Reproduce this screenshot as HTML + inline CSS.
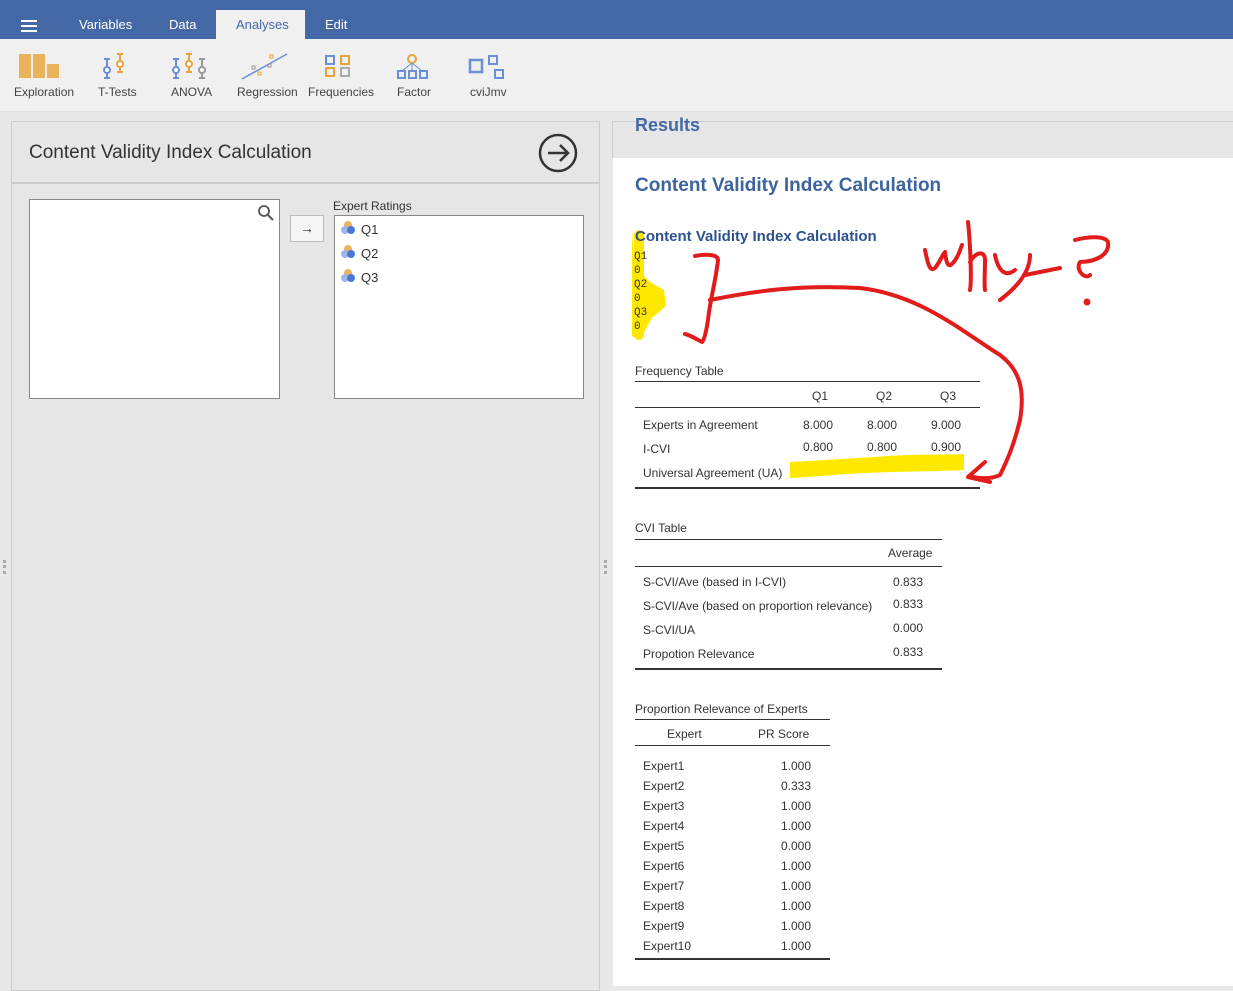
<!DOCTYPE html>
<html><head><meta charset="utf-8"><style>
*{margin:0;padding:0;box-sizing:border-box}
body{width:1233px;height:986px;overflow:hidden;background:#e8e8e8;font-family:"Liberation Sans",sans-serif;position:relative;color:#333}
.a{position:absolute;white-space:nowrap}
.t{font-size:12px;color:#333}
.hl{position:absolute;background:#333;height:1px}
</style></head><body>
<div class="a" style="left:0;top:0;width:1233px;height:39px;background:#4468a6"></div>
<div class="a" style="left:21px;top:25px;width:16px;height:2px;background:#fff;box-shadow:0 -5px 0 #fff,0 5px 0 #fff"></div>
<div class="a" style="left:79px;top:17px;color:#fff;font-size:13px">Variables</div>
<div class="a" style="left:169px;top:17px;color:#fff;font-size:13px">Data</div>
<div class="a" style="left:216px;top:10px;width:89px;height:29px;background:#f0f0f0"></div>
<div class="a" style="left:236px;top:17px;color:#4468a6;font-size:13px">Analyses</div>
<div class="a" style="left:325px;top:17px;color:#fff;font-size:13px">Edit</div>
<div class="a" style="left:0;top:39px;width:1233px;height:73px;background:#f0f0f0;border-bottom:1px solid #ddd"></div>
<svg class="a" style="left:0;top:39px" width="520" height="45">
<g fill="#e8b35a"><rect x="19" y="15" width="12" height="24"/><rect x="33" y="15" width="12" height="24"/><rect x="47" y="25" width="12" height="14"/></g>
<g fill="none" stroke-width="2"><path d="M107 20v19M104 20h6M104 39h6" stroke="#6b8fd6"/><circle cx="107" cy="31" r="3" stroke="#6b8fd6" fill="#fff"/><path d="M120 15v18M117 15h6M117 33h6" stroke="#e8a43a"/><circle cx="120" cy="25" r="3" stroke="#e8a43a" fill="#fff"/>
<path d="M176 20v19M173 20h6M173 39h6" stroke="#6b8fd6"/><circle cx="176" cy="31" r="3" stroke="#6b8fd6" fill="#fff"/><path d="M189 15v18M186 15h6M186 33h6" stroke="#e8a43a"/><circle cx="189" cy="25" r="3" stroke="#e8a43a" fill="#fff"/><path d="M202 20v19M199 20h6M199 39h6" stroke="#999"/><circle cx="202" cy="31" r="3" stroke="#999" fill="#fff"/>
<path d="M242 40L287 15" stroke="#6b8fd6" stroke-width="1.5"/><g stroke-width="1"><rect x="252" y="27" width="3" height="3" stroke="#999"/><rect x="258" y="33" width="3" height="3" stroke="#e8a43a"/><rect x="268" y="25" width="3" height="3" stroke="#999"/><rect x="270" y="16" width="3" height="3" stroke="#e8a43a"/></g>
<rect x="326" y="17" width="8" height="8" stroke="#6b8fd6"/><rect x="341" y="17" width="8" height="8" stroke="#e8a43a"/><rect x="326" y="29" width="8" height="8" stroke="#e8a43a"/><rect x="341" y="29" width="8" height="8" stroke="#aaa"/>
<circle cx="412" cy="20" r="4" stroke="#e8a43a"/><path d="M412 24L402 32M412 24v8M412 24l10 8" stroke="#6b8fd6" stroke-width="1"/><rect x="398" y="32" width="7" height="7" stroke="#6b8fd6"/><rect x="409" y="32" width="7" height="7" stroke="#6b8fd6"/><rect x="420" y="32" width="7" height="7" stroke="#6b8fd6"/>
<rect x="470" y="21" width="12" height="12" stroke="#6b8fd6" stroke-width="2.5"/><rect x="489" y="17" width="8" height="8" stroke="#6b8fd6"/><rect x="495" y="31" width="8" height="8" stroke="#6b8fd6"/></g>
</svg>
<div class="a" style="top:85px;left:14px;font-size:12px;color:#444">Exploration</div>
<div class="a" style="top:85px;left:98px;font-size:12px;color:#444">T-Tests</div>
<div class="a" style="top:85px;left:171px;font-size:12px;color:#444">ANOVA</div>
<div class="a" style="top:85px;left:237px;font-size:12px;color:#444">Regression</div>
<div class="a" style="top:85px;left:308px;font-size:12px;color:#444">Frequencies</div>
<div class="a" style="top:85px;left:397px;font-size:12px;color:#444">Factor</div>
<div class="a" style="top:85px;left:470px;font-size:12px;color:#444">cviJmv</div>

<div class="a" style="left:11px;top:121px;width:589px;height:870px;background:#e6e6e6;border:1px solid #ccc"></div>
<div class="a" style="left:29px;top:142px;font-size:19px;color:#333">Content Validity Index Calculation</div>
<div class="a" style="left:12px;top:182px;width:587px;height:2px;background:#ccc"></div>
<svg class="a" style="left:536px;top:131px" width="44" height="44"><circle cx="22" cy="22" r="18" fill="none" stroke="#333" stroke-width="2.5"/><path d="M12 22h19M24 14l8 8-8 8" fill="none" stroke="#333" stroke-width="2.5"/></svg>
<div class="a" style="left:29px;top:199px;width:251px;height:200px;background:#fff;border:1px solid #888"></div>
<svg class="a" style="left:257px;top:204px" width="18" height="18"><circle cx="7" cy="7" r="5" fill="none" stroke="#555" stroke-width="1.8"/><path d="M11 11l5 5" stroke="#555" stroke-width="2"/></svg>
<div class="a" style="left:290px;top:215px;width:34px;height:27px;background:#f5f5f5;border:1px solid #bbb;text-align:center;font-size:14px;line-height:25px">→</div>
<div class="a" style="left:333px;top:199px;font-size:12px">Expert Ratings</div>
<div class="a" style="left:334px;top:215px;width:250px;height:184px;background:#fff;border:1px solid #888"></div>
<svg class="a" style="left:340px;top:220px" width="20" height="70"><g><circle cx="8" cy="5" r="4" fill="#e8b35a"/><circle cx="5" cy="10" r="4" fill="#9fb8e8"/><circle cx="11" cy="10" r="4" fill="#4a78d6"/></g><g transform="translate(0,24)"><circle cx="8" cy="5" r="4" fill="#e8b35a"/><circle cx="5" cy="10" r="4" fill="#9fb8e8"/><circle cx="11" cy="10" r="4" fill="#4a78d6"/></g><g transform="translate(0,48)"><circle cx="8" cy="5" r="4" fill="#e8b35a"/><circle cx="5" cy="10" r="4" fill="#9fb8e8"/><circle cx="11" cy="10" r="4" fill="#4a78d6"/></g></svg>
<div class="a" style="left:361px;top:222px;font-size:13px">Q1</div>
<div class="a" style="left:361px;top:246px;font-size:13px">Q2</div>
<div class="a" style="left:361px;top:270px;font-size:13px">Q3</div>

<div class="a" style="left:612px;top:121px;width:621px;height:37px;background:#e6e6e6;border-top:1px solid #ccc;border-left:1px solid #ccc"></div>
<div class="a" style="left:635px;top:112px;font-size:18px;font-weight:bold;color:#4468a6;height:19px;overflow:hidden;line-height:26px">Results</div>
<div class="a" style="left:613px;top:158px;width:620px;height:828px;background:#fff"></div>
<div class="a" style="left:635px;top:175px;font-size:19px;font-weight:bold;color:#3e64a0">Content Validity Index Calculation</div>
<svg class="a" style="left:625px;top:225px" width="60" height="120"><path d="M632 230L634 262L640 272L650 282L664 290L666 306L652 318L644 332L640 340L632 336Z" transform="translate(-625,-225)" fill="#ffe800"/><path d="M14 10L14 110" stroke="#ffe800" stroke-width="10" stroke-linecap="round"/></svg>
<div class="a" style="left:635px;top:228px;font-size:15px;font-weight:bold;color:#2e5290">Content Validity Index Calculation</div>
<div class="a" style="left:634px;top:250px;font-family:'Liberation Mono',monospace;font-size:11px;line-height:14px;color:#333">Q1<br>0<br>Q2<br>0<br>Q3<br>0</div>

<div class="a t" style="left:635px;top:364px">Frequency Table</div>
<div class="hl" style="left:635px;top:381px;width:345px"></div>
<div class="a t" style="left:812px;top:389px">Q1</div><div class="a t" style="left:876px;top:389px">Q2</div><div class="a t" style="left:940px;top:389px">Q3</div>
<div class="hl" style="left:635px;top:407px;width:345px"></div>
<div class="a t" style="left:643px;top:418px">Experts in Agreement</div><div class="a t" style="left:803px;top:418px">8.000</div><div class="a t" style="left:867px;top:418px">8.000</div><div class="a t" style="left:931px;top:418px">9.000</div>
<div class="a t" style="left:643px;top:442px">I-CVI</div><div class="a t" style="left:803px;top:440px">0.800</div><div class="a t" style="left:867px;top:440px">0.800</div><div class="a t" style="left:931px;top:440px">0.900</div>
<div class="a t" style="left:643px;top:466px">Universal Agreement (UA)</div>
<svg class="a" style="left:788px;top:450px" width="180" height="32"><path d="M2 12C40 10 70 8 100 6C130 4 150 5 176 4L176 20C140 22 110 21 60 24C30 26 10 28 2 28Z" fill="#ffe800"/></svg>
<div class="hl" style="left:635px;top:487px;width:345px;height:2px"></div>

<div class="a t" style="left:635px;top:521px">CVI Table</div>
<div class="hl" style="left:635px;top:539px;width:307px"></div>
<div class="a t" style="left:888px;top:546px">Average</div>
<div class="hl" style="left:635px;top:566px;width:307px"></div>
<div class="a t" style="left:643px;top:575px">S-CVI/Ave (based in I-CVI)</div><div class="a t" style="left:893px;top:575px">0.833</div>
<div class="a t" style="left:643px;top:599px">S-CVI/Ave (based on proportion relevance)</div><div class="a t" style="left:893px;top:597px">0.833</div>
<div class="a t" style="left:643px;top:623px">S-CVI/UA</div><div class="a t" style="left:893px;top:621px">0.000</div>
<div class="a t" style="left:643px;top:647px">Propotion Relevance</div><div class="a t" style="left:893px;top:645px">0.833</div>
<div class="hl" style="left:635px;top:668px;width:307px;height:2px"></div>

<div class="a t" style="left:635px;top:702px">Proportion Relevance of Experts</div>
<div class="hl" style="left:635px;top:719px;width:195px"></div>
<div class="a t" style="left:667px;top:727px">Expert</div><div class="a t" style="left:758px;top:727px">PR Score</div>
<div class="hl" style="left:635px;top:745px;width:195px"></div>
<div class="a t" style="left:643px;top:756px;line-height:20px">Expert1<br>Expert2<br>Expert3<br>Expert4<br>Expert5<br>Expert6<br>Expert7<br>Expert8<br>Expert9<br>Expert10</div>
<div class="a t" style="left:781px;top:756px;line-height:20px">1.000<br>0.333<br>1.000<br>1.000<br>0.000<br>1.000<br>1.000<br>1.000<br>1.000<br>1.000</div>
<div class="hl" style="left:635px;top:958px;width:195px;height:2px"></div>

<svg class="a" style="left:0;top:0" width="1233" height="986" fill="none" stroke="#e21b1b" stroke-width="4" stroke-linecap="round" stroke-linejoin="round">
<path d="M695 256C705 254 718 254 718 260C716 280 710 300 708 320C706 333 704 340 702 342C698 340 690 335 685 334"/>
<path d="M710 300C760 290 800 285 860 288C920 295 960 330 1000 355C1020 370 1025 390 1020 420C1015 440 1010 455 1000 475C990 480 975 478 970 476M985 462L968 477L990 482"/>
<path d="M925 250C928 265 930 272 935 268C940 262 942 255 945 252C946 262 948 268 952 264C958 258 960 250 962 245M968 222C970 240 972 280 970 290M970 262C975 252 985 250 985 260C985 272 984 285 985 290M995 255C998 270 1005 278 1015 270M1030 255C1030 270 1020 285 1000 300M1025 275L1060 268M1075 240C1090 236 1105 236 1108 242C1110 255 1095 262 1080 262C1075 270 1085 280 1090 275"/>
<circle cx="1087" cy="302" r="1.5" fill="#e21b1b"/>
</svg>
<div class="a" style="left:3px;top:560px;width:3px;height:14px;border-left:3px dotted #aaa"></div>
<div class="a" style="left:604px;top:560px;width:3px;height:14px;border-left:3px dotted #aaa"></div>
</body></html>
